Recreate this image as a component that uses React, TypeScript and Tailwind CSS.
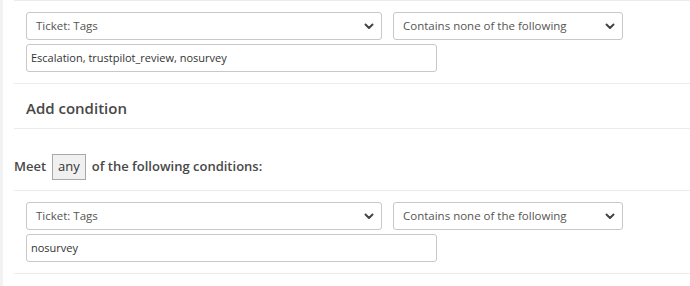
import React from "react";

function Chevron() {
  return (
    <svg width="10" height="7" viewBox="0 0 10 7" className="shrink-0">
      <path d="M1.5 1.5 L5 5 L8.5 1.5" fill="none" stroke="#444" strokeWidth="2" strokeLinecap="round" strokeLinejoin="round" />
    </svg>
  );
}

function SelectBox({ label, w }: { label: string; w: string }) {
  return (
    <div className={`${w} h-[28px] border border-[#c8c8c8] rounded-[3px] flex items-center justify-between pl-[9px] pr-[7px] text-[11.5px] text-[#555] bg-white`}>
      <span>{label}</span>
      <Chevron />
    </div>
  );
}

function Condition({ value }: { value: string }) {
  return (
    <div className="border-b border-[#ececec] pl-[12px] pt-[11px] pb-[11px] flex flex-col gap-[4px]">
      <div className="flex gap-[11px]">
        <SelectBox label="Ticket: Tags" w="w-[356px]" />
        <SelectBox label="Contains none of the following" w="w-[230px]" />
      </div>
      <div className="w-[411px] h-[28px] border border-[#c8c8c8] rounded-[3px] flex items-center pl-[4px] text-[11px] text-[#333]">
        {value}
      </div>
    </div>
  );
}

export default function App() {
  return (
    <div className="w-[690px] h-[286px] bg-white flex overflow-hidden" style={{ fontFamily: '"Open Sans", "Noto Sans", sans-serif' }}>
      <div className="w-[3px] bg-[#f2f2f2]" />
      <div className="flex-1 pl-[11px]">
        <div className="border-t border-[#ececec]">
          <Condition value="Escalation, trustpilot_review, nosurvey" />
          <div className="border-b border-[#ececec] h-[45px] pl-[12px] flex items-center pt-[4px] text-[15px] font-semibold text-[#484848]">
            Add condition
          </div>
          <div className="border-b border-[#ececec] h-[62px] flex items-center pt-[14px] text-[13px] font-semibold text-[#484848]">
            <span>Meet</span>
            <span className="mx-[6px] h-[26px] px-[5px] flex items-center border border-[#a8a8a8] bg-[#f0f0f0] font-normal text-[#333]">any</span>
            <span>of the following conditions:</span>
          </div>
          <Condition value="nosurvey" />
        </div>
      </div>
    </div>
  );
}
